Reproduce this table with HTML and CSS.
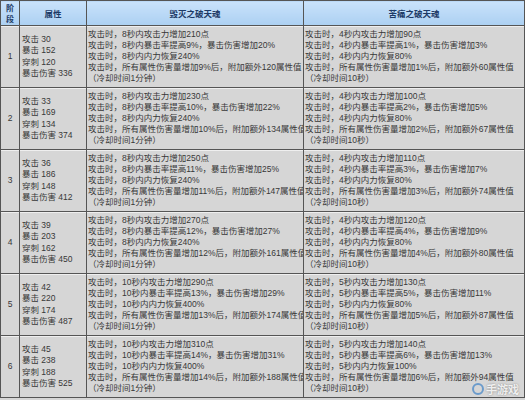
FILE: index.html
```html
<!DOCTYPE html>
<html lang="zh">
<head>
<meta charset="utf-8">
<title>破天魂属性</title>
<link rel="stylesheet" href="styles.css">
</head>
<body>
<table class="grid">
  <colgroup>
    <col class="c-stage">
    <col class="c-attr">
    <col class="c-a">
    <col class="c-b">
  </colgroup>
  <thead>
    <tr class="head">
      <th class="stage-h"><span class="stack"><span>阶</span><span>段</span></span></th>
      <th>属性</th>
      <th>毁灭之破天魂</th>
      <th>苦痛之破天魂</th>
    </tr>
  </thead>
  <tbody>
    <tr>
      <td class="stage">1</td>
      <td class="attr">攻击 30<br>暴击 152<br>穿刺 120<br>暴击伤害 336</td>
      <td class="fx">攻击时，8秒内攻击力增加210点<br>攻击时，8秒内暴击率提高9%，暴击伤害增加20%<br>攻击时，8秒内内力恢复240%<br>攻击时，所有属性伤害量增加9%后，附加额外120属性值<br>（冷却时间1分钟）</td>
      <td class="fx">攻击时，4秒内攻击力增加90点<br>攻击时，4秒内暴击率提高1%，暴击伤害增加3%<br>攻击时，4秒内内力恢复80%<br>攻击时，所有属性伤害量增加1%后，附加额外60属性值<br>（冷却时间10秒）</td>
    </tr>
    <tr>
      <td class="stage">2</td>
      <td class="attr">攻击 33<br>暴击 169<br>穿刺 134<br>暴击伤害 374</td>
      <td class="fx">攻击时，8秒内攻击力增加230点<br>攻击时，8秒内暴击率提高10%，暴击伤害增加22%<br>攻击时，8秒内内力恢复240%<br>攻击时，所有属性伤害量增加10%后，附加额外134属性值<br>（冷却时间1分钟）</td>
      <td class="fx">攻击时，4秒内攻击力增加100点<br>攻击时，4秒内暴击率提高2%，暴击伤害增加5%<br>攻击时，4秒内内力恢复80%<br>攻击时，所有属性伤害量增加2%后，附加额外67属性值<br>（冷却时间10秒）</td>
    </tr>
    <tr>
      <td class="stage">3</td>
      <td class="attr">攻击 36<br>暴击 186<br>穿刺 148<br>暴击伤害 412</td>
      <td class="fx">攻击时，8秒内攻击力增加250点<br>攻击时，8秒内暴击率提高11%，暴击伤害增加25%<br>攻击时，8秒内内力恢复240%<br>攻击时，所有属性伤害量增加11%后，附加额外147属性值<br>（冷却时间1分钟）</td>
      <td class="fx">攻击时，4秒内攻击力增加110点<br>攻击时，4秒内暴击率提高3%，暴击伤害增加7%<br>攻击时，4秒内内力恢复80%<br>攻击时，所有属性伤害量增加3%后，附加额外74属性值<br>（冷却时间10秒）</td>
    </tr>
    <tr>
      <td class="stage">4</td>
      <td class="attr">攻击 39<br>暴击 203<br>穿刺 162<br>暴击伤害 450</td>
      <td class="fx">攻击时，8秒内攻击力增加270点<br>攻击时，8秒内暴击率提高12%，暴击伤害增加27%<br>攻击时，8秒内内力恢复240%<br>攻击时，所有属性伤害量增加12%后，附加额外161属性值<br>（冷却时间1分钟）</td>
      <td class="fx">攻击时，4秒内攻击力增加120点<br>攻击时，4秒内暴击率提高4%，暴击伤害增加9%<br>攻击时，4秒内内力恢复80%<br>攻击时，所有属性伤害量增加4%后，附加额外80属性值<br>（冷却时间10秒）</td>
    </tr>
    <tr>
      <td class="stage">5</td>
      <td class="attr">攻击 42<br>暴击 220<br>穿刺 174<br>暴击伤害 487</td>
      <td class="fx">攻击时，10秒内攻击力增加290点<br>攻击时，10秒内暴击率提高13%，暴击伤害增加29%<br>攻击时，10秒内内力恢复400%<br>攻击时，所有属性伤害量增加13%后，附加额外174属性值<br>（冷却时间1分钟）</td>
      <td class="fx">攻击时，5秒内攻击力增加130点<br>攻击时，5秒内暴击率提高5%，暴击伤害增加11%<br>攻击时，5秒内内力恢复80%<br>攻击时，所有属性伤害量增加5%后，附加额外87属性值<br>（冷却时间10秒）</td>
    </tr>
    <tr>
      <td class="stage">6</td>
      <td class="attr">攻击 45<br>暴击 238<br>穿刺 188<br>暴击伤害 525</td>
      <td class="fx">攻击时，10秒内攻击力增加310点<br>攻击时，10秒内暴击率提高14%，暴击伤害增加31%<br>攻击时，10秒内内力恢复400%<br>攻击时，所有属性伤害量增加14%后，附加额外188属性值<br>（冷却时间1分钟）</td>
      <td class="fx">攻击时，5秒内攻击力增加140点<br>攻击时，5秒内暴击率提高6%，暴击伤害增加13%<br>攻击时，5秒内内力恢复100%<br>攻击时，所有属性伤害量增加6%后，附加额外94属性值<br>（冷却时间10秒）</td>
    </tr>
  </tbody>
</table>
<div class="mark"><span class="mark-icon"></span>手游戏</div>
</body>
</html>
```
FILE: styles.css
```css
html, body {
  margin: 0;
  padding: 0;
  width: 525px;
  height: 400px;
  overflow: hidden;
  background: #d6d6d6;
}
body {
  position: relative;
  font-family: "Liberation Sans", "Noto Sans CJK SC", sans-serif;
  color: #383838;
}
.grid {
  border-collapse: collapse;
  table-layout: fixed;
  width: 524px;
  font-size: 8.5px;
  line-height: 11px;
}
.c-stage { width: 19px; }
.c-attr { width: 67px; }
.c-a { width: 217px; }
.c-b { width: 221px; }
.grid th, .grid td {
  border: 1px solid #555;
  padding: 0;
  overflow: hidden;
  white-space: nowrap;
}
.head th {
  height: 24px;
  background: linear-gradient(#c9e2fb, #acd0f2);
  color: #1d3a66;
  font-weight: bold;
  font-family: "Noto Sans CJK SC", sans-serif;
  font-size: 8.5px;
  line-height: 11px;
  text-align: center;
  vertical-align: middle;
}
.stack {
  display: flex;
  flex-direction: column;
  align-items: center;
  font-size: 8px;
  line-height: 11px;
}
.grid tbody td {
  height: 61px;
  background: #d6d6d6;
  vertical-align: middle;
  border-top: 1px solid #4a4a4a;
  box-shadow: inset 0 1px 0 #efefef;
}
.stage {
  text-align: center;
}
.attr {
  padding-left: 2px !important;
  line-height: 11.5px;
}
.fx {
  padding-left: 1px !important;
}
.mark {
  position: absolute;
  right: 6px;
  bottom: 3px;
  display: flex;
  align-items: center;
  gap: 2px;
  font-family: "Noto Sans CJK SC", sans-serif;
  font-size: 11px;
  font-weight: bold;
  color: rgba(255, 255, 255, 0.85);
  text-shadow: 0 0 2px rgba(0, 0, 0, 0.4);
}
.mark-icon {
  width: 12px;
  height: 12px;
  border-radius: 50%;
  border: 2px solid rgba(80, 140, 200, 0.8);
  box-sizing: border-box;
}
```
